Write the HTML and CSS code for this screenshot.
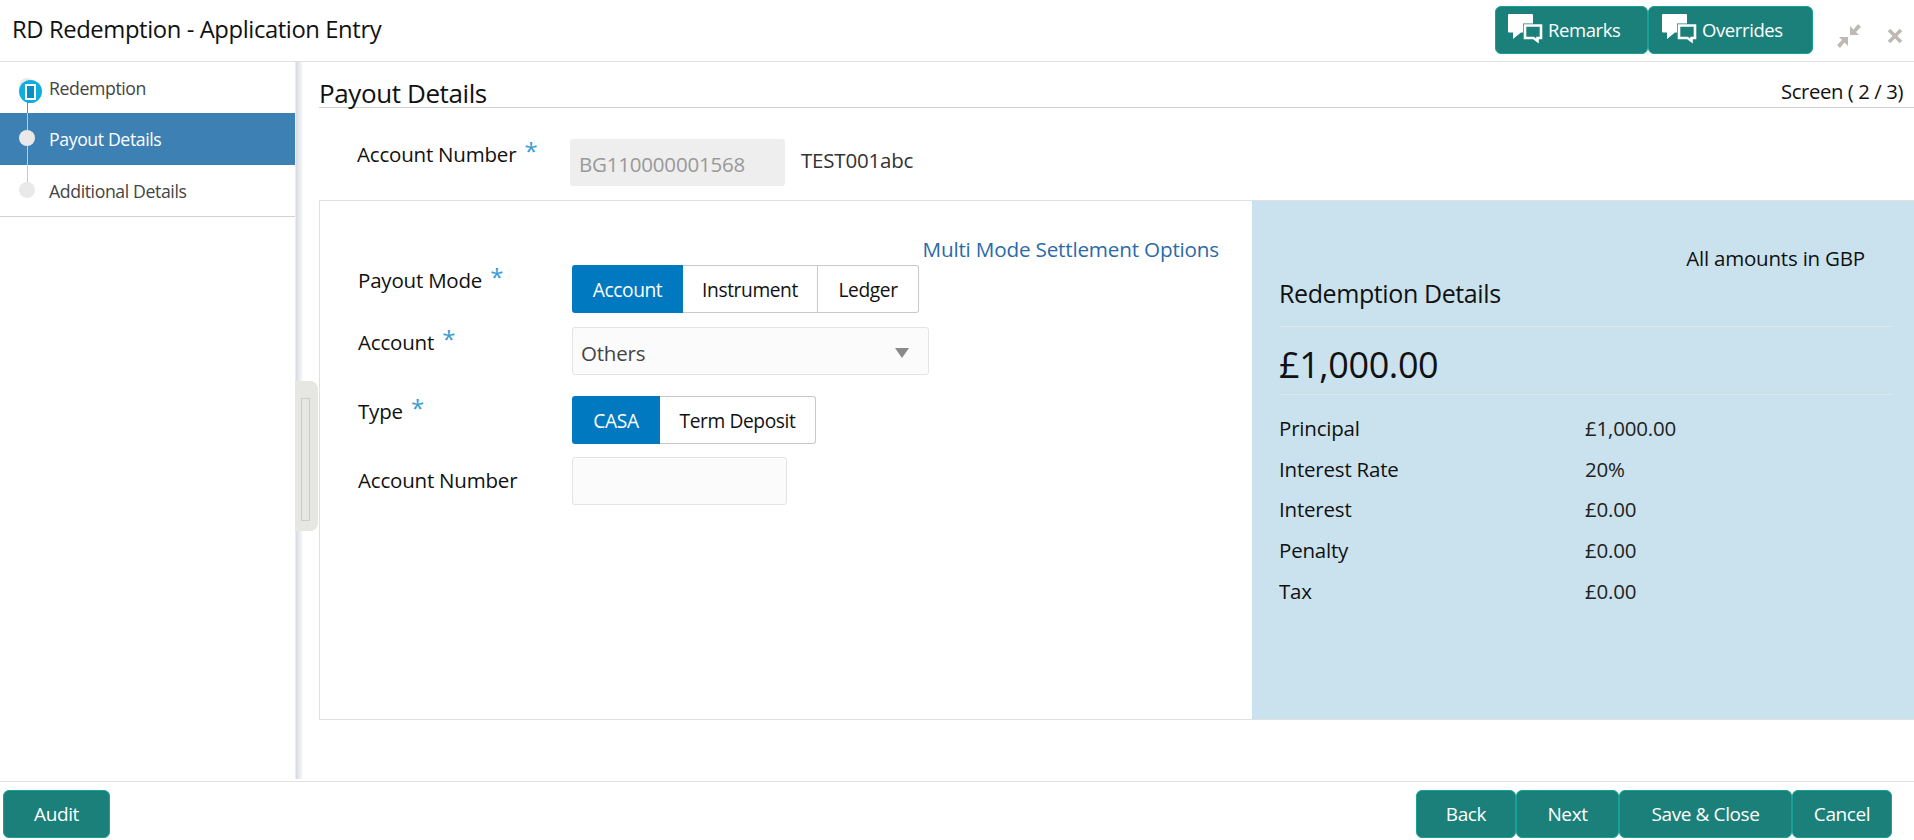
FILE: index.html
```html
<!DOCTYPE html>
<html lang="en">
<head>
    <meta charset="UTF-8">
    <title>RD Redemption - Application Entry</title>
    <link rel="stylesheet" href="styles.css">
</head>
<body>
<svg class="icon-defs" width="0" height="0">
    <symbol id="bubbles" viewBox="0 0 36 30">
        <path d="M1 0H24a1 1 0 0 1 1 1V18.500H13L5 25V18.500H1a1 1 0 0 1-1-1V1a1 1 0 0 1 1-1z" fill="#fff"/>
        <path d="M15 9.500H35V25.500H31V30L25 25.500H15z" fill="#1b7f7a"/>
        <path d="M17 11.500H33V24H29.500V27L25.500 24H17z" fill="#1b7f7a" stroke="#fff" stroke-width="2.600"/>
    </symbol>
</svg>
<header class="top-bar">
    <h1>RD Redemption - Application Entry</h1>
    <div class="top-actions">
        <a class="btn btn-icon"><svg class="bubble-icon"><use href="#bubbles"/></svg>Remarks</a>
        <a class="btn btn-icon btn-overrides"><svg class="bubble-icon"><use href="#bubbles"/></svg>Overrides</a>
        <svg class="win-icon win-collapse" viewBox="0 0 24 24">
            <path d="M13 11V2L16.500 5.500 21 0 24 3 19 8 22 11z" fill="#bdbab5"/>
            <path d="M11 13V22L7.500 18.500 3 24 0 21 5 16 2 13z" fill="#bdbab5"/>
        </svg>
        <svg class="win-icon win-close" viewBox="0 0 16 16">
            <path d="M2 2L14 14M14 2L2 14" stroke="#bdbab5" stroke-width="3.600" fill="none"/>
        </svg>
    </div>
</header>
<div class="page-body">
    <aside class="sidebar">
        <div class="step step-done">
            <span class="step-line line-cyan"></span>
            <span class="step-dot-back"></span>
            <span class="step-dot-current"><span class="step-glyph"></span></span>
            <span class="step-name">Redemption</span>
        </div>
        <div class="step step-active">
            <span class="step-line"></span>
            <span class="step-dot"></span>
            <span class="step-name">Payout Details</span>
        </div>
        <div class="step step-last">
            <span class="step-line"></span>
            <span class="step-dot"></span>
            <span class="step-name">Additional Details</span>
        </div>
    </aside>
    <div class="splitter"><span class="splitter-grip"></span></div>
    <main class="content">
        <div class="content-head">
            <h2>Payout Details</h2>
            <span class="screen-count">Screen ( 2 / 3)</span>
        </div>
        <div class="account-row">
            <label class="account-label">Account Number <span class="req">*</span></label>
            <div class="input input-readonly">BG110000001568</div>
            <span class="account-name">TEST001abc</span>
        </div>
        <div class="card">
            <section class="form-pane">
                <a class="multi-link">Multi Mode Settlement Options</a>
                <div class="form-row row-mode">
                    <label>Payout Mode <span class="req">*</span></label>
                    <div class="toggle">
                        <span class="toggle-item on w-account">Account</span>
                        <span class="toggle-item w-instrument">Instrument</span>
                        <span class="toggle-item w-ledger">Ledger</span>
                    </div>
                </div>
                <div class="form-row row-account">
                    <label>Account <span class="req">*</span></label>
                    <div class="select">Others<span class="caret"></span></div>
                </div>
                <div class="form-row row-type">
                    <label>Type <span class="req">*</span></label>
                    <div class="toggle">
                        <span class="toggle-item on w-casa">CASA</span>
                        <span class="toggle-item w-term">Term Deposit</span>
                    </div>
                </div>
                <div class="form-row row-number">
                    <label>Account Number</label>
                    <div class="input input-empty"></div>
                </div>
            </section>
            <section class="summary">
                <div class="currency-note">All amounts in GBP</div>
                <h3>Redemption Details</h3>
                <div class="total">£1,000.00</div>
                <dl class="summary-list">
                    <dt>Principal</dt><dd>£1,000.00</dd>
                    <dt>Interest Rate</dt><dd>20%</dd>
                    <dt>Interest</dt><dd>£0.00</dd>
                    <dt>Penalty</dt><dd>£0.00</dd>
                    <dt>Tax</dt><dd>£0.00</dd>
                </dl>
            </section>
        </div>
    </main>
</div>
<footer class="bottom-bar">
    <a class="btn btn-audit">Audit</a>
    <div class="bottom-actions">
        <a class="btn btn-back">Back</a>
        <a class="btn btn-next">Next</a>
        <a class="btn btn-save">Save &amp; Close</a>
        <a class="btn btn-cancel">Cancel</a>
    </div>
</footer>
</body>
</html>
```

FILE: styles.css
```css
* {
    margin: 0;
    padding: 0;
    box-sizing: border-box;
    font-family: "Open Sans", "Noto Sans", sans-serif;
}
html, body {
    height: 840px;
    overflow: hidden;
}
body {
    width: 1914px;
    background-color: #fff;
    color: #111;
    font-size: 20.500px;
    letter-spacing: -0.2px;
}
.icon-defs {
    position: absolute;
}

/* top bar */
.top-bar {
    height: 62px;
    border-bottom: 1px solid #e0e0e0;
    display: flex;
    justify-content: space-between;
    padding: 6px 0 0 12px;
}
.top-bar h1 {
    font-size: 23.800px;
    font-weight: 400;
    line-height: 47px;
    letter-spacing: -0.4px;
}
.top-actions {
    display: flex;
    align-items: flex-start;
}
.btn {
    display: flex;
    align-items: center;
    justify-content: center;
    height: 48px;
    background-color: #1b7f7a;
    border: 1px solid #15a398;
    border-radius: 6px;
    color: #fff;
    font-size: 19px;
    letter-spacing: -0.4px;
}
.btn-icon {
    width: 153px;
    justify-content: flex-start;
    padding: 0 0 2px 12px;
    font-size: 18.500px;
}
.btn-overrides {
    width: 165px;
    padding-left: 13px;
}
.bubble-icon {
    width: 36px;
    height: 30px;
    margin-right: 4px;
}
.win-icon {
    display: block;
}
.win-collapse {
    width: 24px;
    height: 24px;
    margin: 18px 0 0 24px;
}
.win-close {
    width: 16px;
    height: 16px;
    margin: 22px 11px 0 26px;
}

/* side steps */
.page-body {
    height: 717px;
    display: flex;
    position: relative;
}
.sidebar {
    width: 303px;
    padding-right: 8px;
    background: linear-gradient(to right, #fff 295px, #d5dbe2 296px, #f6f6f6 302px, #fff 303px);
    flex-shrink: 0;
}
.step {
    height: 51px;
    position: relative;
    font-size: 17.700px;
    letter-spacing: -0.4px;
    color: #444;
}
.step-active {
    height: 52px;
    background-color: #3d80b3;
    color: #fff;
}
.step-last {
    height: 52px;
    border-bottom: 1px solid #d5d3ce;
}
.step-name {
    position: absolute;
    left: 49px;
    top: 14px;
}
.step-line {
    position: absolute;
    left: 27px;
    top: 0;
    width: 1px;
    height: 100%;
    background-color: #c9c9c9;
}
.line-cyan {
    top: 40px;
    height: 11px;
    background-color: #10aee0;
}
.step-last .step-line {
    height: 20px;
}
.step-dot {
    position: absolute;
    left: 19px;
    top: 17px;
    width: 16px;
    height: 16px;
    border-radius: 50%;
    background-color: #e9e9e9;
}
.step-dot-back {
    position: absolute;
    left: 19px;
    top: 16px;
    width: 16px;
    height: 16px;
    border-radius: 50%;
    background-color: #e9e9e9;
}
.step-dot-current {
    position: absolute;
    left: 19px;
    top: 18px;
    width: 23px;
    height: 23px;
    border-radius: 50%;
    background-color: #10aee0;
    display: flex;
    align-items: center;
    justify-content: center;
}
.step-glyph {
    width: 11px;
    height: 16px;
    border: 2px solid #fff;
    background-color: #0a8fc4;
}

/* splitter sits over the gap next to the side steps */
.splitter {
    position: absolute;
    left: 295px;
    top: 319px;
    width: 23px;
    height: 150px;
    background-color: #e6e6e3;
    border-radius: 0 8px 8px 0;
}
.splitter-grip {
    position: absolute;
    left: 6px;
    top: 17px;
    width: 9px;
    height: 123px;
    border: 1px solid #cccccc;
}

/* content */
.content {
    flex: 1;
    padding-left: 16px;
    min-width: 0;
}
.content-head {
    height: 46px;
    border-bottom: 1px solid #cfcfcf;
    display: flex;
    justify-content: space-between;
    align-items: flex-end;
}
.content-head h2 {
    font-size: 26px;
    font-weight: 400;
    line-height: 38px;
    margin-bottom: -5px;
    letter-spacing: -0.4px;
}
.screen-count {
    font-size: 20.300px;
    letter-spacing: -0.4px;
    line-height: 26px;
    margin: 0 11px 3px 0;
}
.account-row {
    height: 92px;
    display: flex;
    position: relative;
}
.account-label {
    width: 251px;
    padding: 33px 0 0 38px;
    line-height: 26px;
}
.req {
    color: #3a9bd5;
    font-size: 24px;
    line-height: 16px;
    margin-left: 3px;
    vertical-align: 2px;
}
.input {
    width: 215px;
    height: 47px;
    margin-top: 31px;
    border-radius: 3px;
}
.input-readonly {
    background-color: #eeeeee;
    color: #999;
    padding: 12px 0 0 9px;
    line-height: 26px;
}
.account-name {
    margin: 39px 0 0 16px;
    color: #333;
    line-height: 26px;
}
.card {
    height: 520px;
    border: 1px solid #e0e0e0;
    border-right: none;
    display: flex;
}
.form-pane {
    width: 932px;
    position: relative;
}
.multi-link {
    position: absolute;
    right: 33px;
    top: 34px;
    color: #2b6aa8;
    font-size: 20.700px;
}
.form-row {
    display: flex;
    padding-left: 38px;
}
.form-row label {
    width: 214px;
    line-height: 26px;
}
.row-mode {
    margin-top: 64px;
}
.row-mode label {
    padding-top: 2px;
}
.row-account {
    margin-top: 14px;
}
.row-account label {
    padding-top: 2px;
}
.row-type {
    margin-top: 21px;
}
.row-type label {
    padding-top: 2px;
}
.row-number {
    margin-top: 13px;
}
.row-number label {
    padding-top: 10px;
}
.toggle {
    display: flex;
    height: 48px;
    font-size: 19.200px;
    letter-spacing: -0.4px;
}
.toggle-item {
    display: flex;
    align-items: center;
    justify-content: center;
    border: 1px solid #c9c9c9;
    border-left: none;
    padding-top: 1px;
}
.toggle-item:first-child {
    border-radius: 3px 0 0 3px;
    border: none;
}
.toggle-item:last-child {
    border-radius: 0 3px 3px 0;
}
.toggle-item.on {
    background-color: #0079c1;
    color: #fff;
}
.w-account { width: 111px; }
.w-instrument { width: 135px; }
.w-ledger { width: 101px; }
.w-casa { width: 88px; }
.w-term { width: 156px; }
.select {
    width: 357px;
    height: 48px;
    background-color: #fbfbfb;
    border: 1px solid #e4e4e4;
    border-radius: 3px;
    color: #444;
    padding: 12px 0 0 8px;
    line-height: 26px;
    position: relative;
}
.caret {
    position: absolute;
    right: 19px;
    top: 20px;
    border-left: 7px solid transparent;
    border-right: 7px solid transparent;
    border-top: 10px solid #8a8a8a;
}
.input-empty {
    height: 48px;
    margin-top: 0;
    background-color: #fbfbfb;
    border: 1px solid #e4e4e4;
}

/* summary panel */
.summary {
    flex: 1;
    background-color: #cae2ee;
    padding: 0 22px 0 27px;
    position: relative;
}
.currency-note {
    text-align: right;
    padding: 44px 27px 0 0;
    line-height: 26px;
}
.summary h3 {
    font-size: 25px;
    font-weight: 400;
    line-height: 32px;
    height: 57px;
    margin-top: -1px;
    padding-top: 7px;
    letter-spacing: -0.4px;
    border-bottom: 1px solid #dfe6ea;
}
.total {
    font-size: 36px;
    letter-spacing: -0.4px;
    height: 68px;
    line-height: 76px;
    border-bottom: 1px solid #dfe6ea;
}
.summary-list {
    display: grid;
    grid-template-columns: 306px 1fr;
    grid-auto-rows: 40.700px;
    padding-top: 13px;
    line-height: 40px;
}
.summary-list dd {
    color: #222;
}

/* bottom bar */
.bottom-bar {
    height: 61px;
    border-top: 1px solid #e0e0e0;
    margin-top: 2px;
    display: flex;
    justify-content: space-between;
    padding: 8px 22px 0 3px;
}
.btn-audit {
    width: 107px;
}
.bottom-actions {
    display: flex;
}
.btn-back { width: 100px; }
.btn-next { width: 103px; }
.btn-save { width: 173px; }
.btn-cancel { width: 100px; }
```
